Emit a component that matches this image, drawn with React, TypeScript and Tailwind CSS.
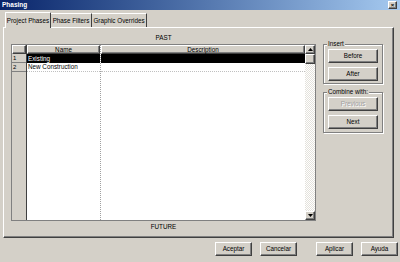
const FONT = "font-['Liberation_Sans',Arial,sans-serif]";

const raised =
  'border border-t-white border-l-white border-r-[#404040] border-b-[#404040] shadow-[inset_-1px_-1px_0_#808080]';

function Btn({ label, w, disabled }: { label: string; w: string; disabled?: boolean }) {
  return (
    <div
      className={`${w} h-[14px] bg-[#d4d0c8] ${raised} flex items-center justify-center text-[6.3px] whitespace-nowrap ${
        disabled ? 'text-[#a0a0a0] [text-shadow:1px_1px_0_#fff]' : 'text-black'
      }`}
    >
      {label}
    </div>
  );
}

function Group({ title, children, h }: { title: string; children: React.ReactNode; h: string }) {
  return (
    <div className={`relative w-[60px] ${h} border border-[#808080] shadow-[inset_1px_1px_0_#fff,1px_1px_0_#fff] flex flex-col items-center pt-[4px] gap-[4px]`}>
      <span className="absolute -top-[5px] left-[3px] px-[1px] bg-[#d4d0c8] text-[6.3px] leading-[8px] whitespace-nowrap">{title}</span>
      {children}
    </div>
  );
}

export default function App() {
  return (
    <div className={`${FONT} w-[400px] h-[262px] bg-[#d4d0c8] flex flex-col overflow-hidden text-black`}>
      {/* barre de titre */}
      <div className="h-[10px] bg-gradient-to-r from-[#0a246a] to-[#a6caf0] flex items-center justify-between pl-[2px] pr-[3px]">
        <span className="text-white font-bold text-[6.5px] leading-none">Phasing</span>
        <div className={`w-[9px] h-[8px] bg-[#d4d0c8] ${raised} flex items-center justify-center text-[6px] leading-none font-bold`}>
          ×
        </div>
      </div>

      {/* onglets */}
      <div className="h-[17px] flex items-end pl-[5px] relative z-10 whitespace-nowrap">
        <div className="h-[16px] -mb-[1px] w-[46px] bg-[#d4d0c8] border border-b-0 border-t-white border-l-white border-r-[#404040] flex items-center justify-center text-[6.3px] rounded-t-[1px]">
          Project Phases
        </div>
        <div className="h-[14px] w-[41px] border border-b-0 border-t-white border-l-0 border-r-[#404040] flex items-center justify-center text-[6.3px]">
          Phase Filters
        </div>
        <div className="h-[14px] w-[55px] border border-b-0 border-t-white border-l-0 border-r-[#404040] flex items-center justify-center text-[6.3px]">
          Graphic Overrides
        </div>
      </div>

      {/* panneau */}
      <div className="ml-[3px] w-[391px] h-[211px] border border-t-white border-l-white border-r-[#404040] border-b-[#404040] shadow-[inset_-1px_-1px_0_#808080] flex pt-[4px] pl-[7px]">
        <div className="w-[305px] flex flex-col">
          <div className="h-[12px] text-center text-[6.3px] leading-[12px]">PAST</div>
          {/* grille */}
          <div className="h-[177px] border border-[#808080] flex bg-white">
            <div className="w-[15px] flex flex-col bg-[#d4d0c8] border-r border-[#404040]">
              <div className={`h-[9px] ${raised}`} />
              <div className="h-[9px] border-b border-[#808080] text-[6px] leading-[8px] pl-[1px]">1</div>
              <div className="h-[9px] border-b border-[#808080] text-[6px] leading-[8px] pl-[1px]">2</div>
              <div className="flex-1" />
            </div>
            <div className="w-[74px] flex flex-col border-r border-dotted border-[#a0a0a0]">
              <div className={`h-[9px] bg-[#d4d0c8] ${raised} text-[6.3px] leading-[7px] text-center`}>Name</div>
              <div className="h-[9px] bg-black text-white text-[6.3px] leading-[9px] pl-[1px]">Existing</div>
              <div className="h-[9px] border-b border-dotted border-[#c0c0c0] text-[6.3px] leading-[8px] pl-[1px] whitespace-nowrap">New Construction</div>
            </div>
            <div className="flex-1 flex flex-col">
              <div className={`h-[9px] bg-[#d4d0c8] ${raised} text-[6.3px] leading-[7px] text-center`}>Description</div>
              <div className="h-[9px] bg-black" />
              <div className="h-[9px] border-b border-dotted border-[#c0c0c0]" />
            </div>
            {/* barre de défilement */}
            <div className="w-[10px] flex flex-col bg-[repeating-conic-gradient(#ffffff_0_25%,#e4e2dc_0_50%)] bg-[length:2px_2px]">
              <div className={`h-[9px] bg-[#d4d0c8] ${raised} flex items-center justify-center`}>
                <svg width="5" height="3" viewBox="0 0 5 3"><path d="M2.5 0 L5 3 L0 3 Z" fill="#000" /></svg>
              </div>
              <div className={`h-[10px] bg-[#d4d0c8] ${raised}`} />
              <div className="flex-1" />
              <div className={`h-[9px] bg-[#d4d0c8] ${raised} flex items-center justify-center`}>
                <svg width="5" height="3" viewBox="0 0 5 3"><path d="M0 0 L5 0 L2.5 3 Z" fill="#000" /></svg>
              </div>
            </div>
          </div>
          <div className="h-[12px] text-center text-[6.3px] leading-[12px]">FUTURE</div>
        </div>

        <div className="ml-[7px] pt-[12px] flex flex-col gap-[8px]">
          <Group title="Insert" h="h-[40px]">
            <Btn label="Before" w="w-[50px]" />
            <Btn label="After" w="w-[50px]" />
          </Group>
          <Group title="Combine with:" h="h-[41px]">
            <Btn label="Previous" w="w-[50px]" disabled />
            <Btn label="Next" w="w-[50px]" />
          </Group>
        </div>
      </div>

      {/* boutons du bas */}
      <div className="flex pl-[215px] pt-[4px] gap-[8px]">
        <Btn label="Aceptar" w="w-[37px]" />
        <Btn label="Cancelar" w="w-[37px]" />
        <div className="w-[3px]" />
        <Btn label="Aplicar" w="w-[37px]" />
        <Btn label="Ayuda" w="w-[37px]" />
      </div>
    </div>
  );
}
